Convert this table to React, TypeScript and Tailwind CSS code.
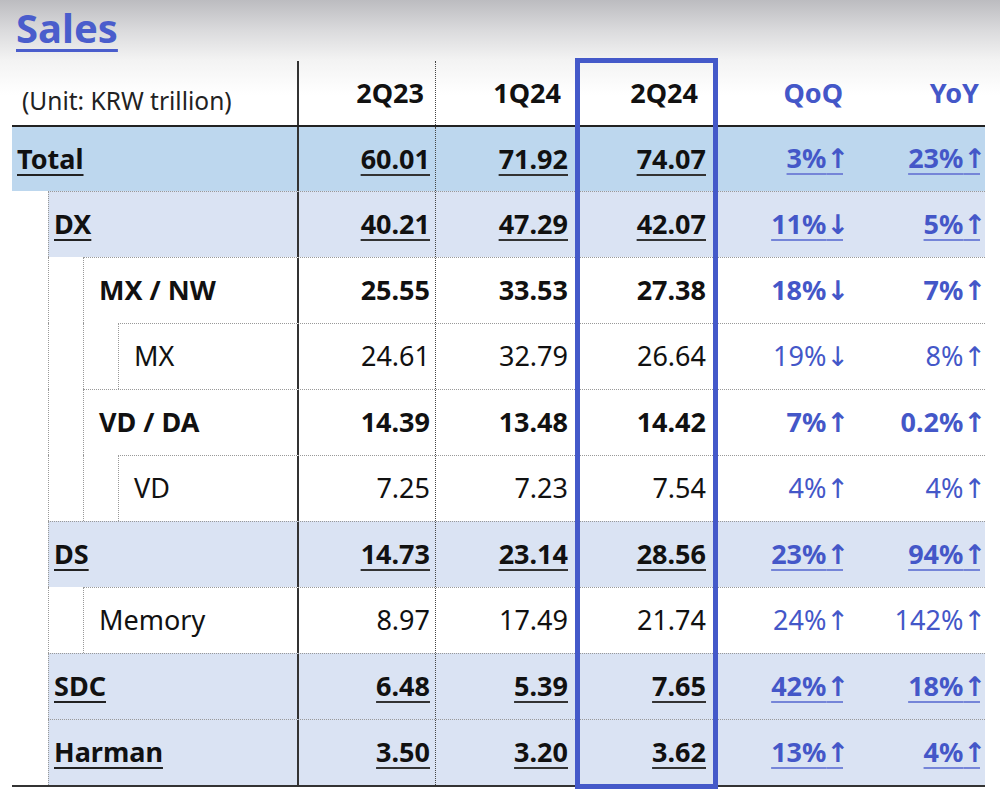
import clsx from 'clsx'

type Row = {
  label: string
  level: 0 | 1 | 2 | 3
  bold: boolean
  underline: boolean
  bg: string
  values: [string, string, string, string, string]
}

const ROWS: Row[] = [
  { label: 'Total', level: 0, bold: true, underline: true, bg: 'bg-[#bdd7ee]', values: ['60.01', '71.92', '74.07', '3%↑', '23%↑'] },
  { label: 'DX', level: 1, bold: true, underline: true, bg: 'bg-[#dae3f3]', values: ['40.21', '47.29', '42.07', '11%↓', '5%↑'] },
  { label: 'MX / NW', level: 2, bold: true, underline: false, bg: 'bg-white', values: ['25.55', '33.53', '27.38', '18%↓', '7%↑'] },
  { label: 'MX', level: 3, bold: false, underline: false, bg: 'bg-white', values: ['24.61', '32.79', '26.64', '19%↓', '8%↑'] },
  { label: 'VD / DA', level: 2, bold: true, underline: false, bg: 'bg-white', values: ['14.39', '13.48', '14.42', '7%↑', '0.2%↑'] },
  { label: 'VD', level: 3, bold: false, underline: false, bg: 'bg-white', values: ['7.25', '7.23', '7.54', '4%↑', '4%↑'] },
  { label: 'DS', level: 1, bold: true, underline: true, bg: 'bg-[#dae3f3]', values: ['14.73', '23.14', '28.56', '23%↑', '94%↑'] },
  { label: 'Memory', level: 2, bold: false, underline: false, bg: 'bg-white', values: ['8.97', '17.49', '21.74', '24%↑', '142%↑'] },
  { label: 'SDC', level: 1, bold: true, underline: true, bg: 'bg-[#dae3f3]', values: ['6.48', '5.39', '7.65', '42%↑', '18%↑'] },
  { label: 'Harman', level: 1, bold: true, underline: true, bg: 'bg-[#dae3f3]', values: ['3.50', '3.20', '3.62', '13%↑', '4%↑'] },
]

// column widths + paddings (header sits a bit further left than the values)
const COLS = [
  { title: '2Q23', w: 'w-[137px] border-r border-dotted border-[#444]', head: 'pr-[11px]', val: 'pr-[5px]', pct: false },
  { title: '1Q24', w: 'w-[140px]', head: 'pr-[15px]', val: 'pr-[8px]', pct: false },
  { title: '2Q24', w: 'w-[141px]', head: 'pr-[19px]', val: 'pr-[11px]', pct: false },
  { title: 'QoQ', w: 'w-[133px]', head: 'pr-[7px]', val: 'pr-[7px]', pct: true },
  { title: 'YoY', w: 'w-[135px]', head: 'pr-[6px]', val: 'pr-[5px]', pct: true },
]

function Value({ text }: { text: string }) {
  const last = text.slice(-1)
  if (last !== '↑' && last !== '↓') return <>{text}</>
  // DejaVu arrow has a solid head like the slide font; trim its wide right bearing
  return (
    <>
      {text.slice(0, -1)}
      <span className="tracking-[-6px] font-['DejaVu_Sans',sans-serif]">{last}</span>
    </>
  )
}

function TableRow({ row }: { row: Row }) {
  const weight = row.bold ? 'font-bold' : 'font-normal'
  return (
    <div className={clsx('flex', row.level === 0 ? 'h-[64px]' : 'h-[66px]')}>
      {row.level >= 1 && <div className="w-[36px] shrink-0 bg-white" />}
      {row.level >= 2 && <div className="w-[35px] shrink-0 border-l border-dotted border-[#999] bg-white" />}
      {row.level >= 3 && <div className="w-[35px] shrink-0 border-l border-dotted border-[#999] bg-white" />}

      <div
        className={clsx(
          'flex flex-1',
          row.bg,
          row.level > 0 && 'border-t border-l border-dotted border-[#999]',
        )}
      >
        {/* label */}
        <div
          className={clsx(
            'flex flex-1 items-center border-r-2 border-solid border-[#333] text-[27px] text-[#111]',
            row.level >= 2 ? 'pl-[15px]' : 'pl-[5px]',
          )}
        >
          <span className={clsx(weight, row.underline && 'underline decoration-2 underline-offset-[5px] decoration-[#222]')}>
            {row.label}
          </span>
        </div>

        {/* values */}
        {COLS.map((col, i) => (
          <div key={col.title} className={clsx('flex shrink-0 items-center justify-end text-[27px]', col.w, col.val)}>
            <span
              className={clsx(
                weight,
                col.pct ? 'text-[#4457c8]' : 'text-[#111]',
                row.underline && 'underline decoration-2 underline-offset-[5px]',
                row.underline && (col.pct ? 'decoration-[#7585d8]' : 'decoration-[#333]'),
              )}
            >
              <Value text={row.values[i]} />
            </span>
          </div>
        ))}
      </div>
    </div>
  )
}

export default function App() {
  return (
    <div className="h-[803px] w-[1000px] overflow-hidden bg-[linear-gradient(to_bottom,#bcbcc0_0px,#dadadc_30px,#f3f3f3_60px,#ffffff_95px)] font-['Noto_Sans','DejaVu_Sans',sans-serif]">
      {/* Title */}
      <div className="h-[61px] pl-[16px] pt-[8px]">
        <span className="text-[40px] leading-none font-bold text-[#4a5dcc] underline decoration-[3px] underline-offset-[6px]">
          Sales
        </span>
      </div>

      {/* Table */}
      <div className="relative ml-[12px] w-[973px]">
        {/* header */}
        <div className="flex h-[64px]">
          <div className="flex flex-1 items-end border-r-2 border-solid border-[#333] pb-[12px] pl-[10px] text-[24.5px] leading-none text-[#222]">
            (Unit: KRW trillion)
          </div>
          {COLS.map((col) => (
            <div
              key={col.title}
              className={clsx(
                'flex shrink-0 items-center justify-end text-[27px] font-bold',
                col.w,
                col.head,
                col.pct ? 'text-[#4457c8]' : 'text-[#111]',
              )}
            >
              {col.title}
            </div>
          ))}
        </div>
        <div className="h-[2px] bg-[#222]" />

        {ROWS.map((row) => (
          <TableRow key={row.label} row={row} />
        ))}

        <div className="h-[2px] bg-[#333]" />

        {/* highlight box over 2Q24 */}
        <div className="pointer-events-none absolute left-[563px] top-[-3px] h-[731px] w-[143px] border-[5px] border-[#4459c9]" />
      </div>
    </div>
  )
}
